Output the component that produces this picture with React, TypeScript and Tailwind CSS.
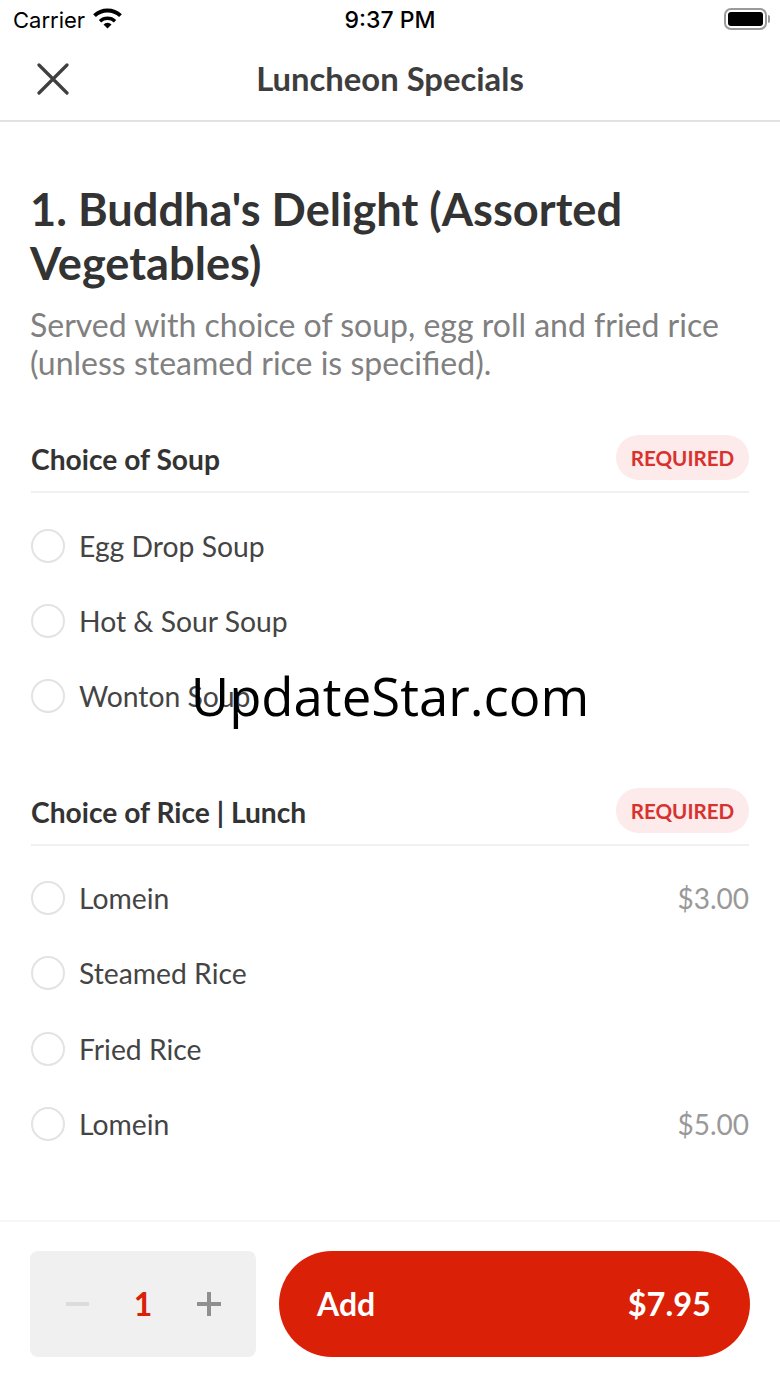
import React from 'react';

interface Option {
  name: string;
  price?: string;
}

const soups: Option[] = [
  { name: 'Egg Drop Soup' },
  { name: 'Hot & Sour Soup' },
  { name: 'Wonton Soup' },
];

const rices: Option[] = [
  { name: 'Lomein', price: '$3.00' },
  { name: 'Steamed Rice' },
  { name: 'Fried Rice' },
  { name: 'Lomein', price: '$5.00' },
];

function StatusBar(): React.ReactElement {
  return (
    <div className="relative flex h-[40px] items-center justify-between pl-[13px] pr-[10px] font-['Inter',sans-serif] text-black">
      <div className="flex items-center gap-[8px]">
        <span className="text-[22px] leading-none">Carrier</span>
        <svg width="29" height="21" viewBox="0 0 29 21" fill="none" className="-mt-[4px]">
          <path d="M14.5 20.5 10.5 16.5a5.6 5.6 0 0 1 8 0Z" fill="#000" />
          <path d="M7 13.2a11 11 0 0 1 15 0" stroke="#000" strokeWidth="3.4" />
          <path d="M1.5 7.6a19 19 0 0 1 26 0" stroke="#000" strokeWidth="4" />
        </svg>
      </div>
      <span className="absolute left-0 right-0 text-center text-[23px] font-medium leading-none">9:37 PM</span>
      <div className="-mt-[3px] flex items-center">
        <div className="flex h-[22px] w-[43px] items-center justify-center rounded-[7px] border-2 border-[#9a9a9a]">
          <div className="h-[14px] w-[35px] rounded-[3px] bg-black" />
        </div>
        <div className="ml-[1px] h-[8px] w-[2px] rounded-r-full bg-[#9a9a9a]" />
      </div>
    </div>
  );
}

function SectionHeader({ title }: { title: string }): React.ReactElement {
  return (
    <div className="flex h-[63px] items-center justify-between border-b-2 border-[#f1f1f1]">
      <h2 className="-mt-[3px] text-[28.2px] font-bold leading-none text-[#333333]">{title}</h2>
      <span className="-mt-[7px] flex h-[45px] w-[133px] items-center justify-center rounded-full bg-[#fdeaea] pt-[2px] text-[20.6px] font-bold leading-none text-[#d8322f]">
        REQUIRED
      </span>
    </div>
  );
}

function OptionRow({ option }: { option: Option }): React.ReactElement {
  return (
    <div className="flex h-[75.4px] items-center">
      <div className="h-[34px] w-[34px] rounded-full border-2 border-[#e3e3e3]" />
      <span className="ml-[14px] text-[28.3px] leading-none text-[#444444]">{option.name}</span>
      {option.price && (
        <span className="ml-auto text-[28px] leading-none text-[#999999]">{option.price}</span>
      )}
    </div>
  );
}

export default function App(): React.ReactElement {
  return (
    <div className="relative flex h-[1387px] w-[780px] flex-col overflow-hidden bg-white font-['Lato',sans-serif]">
      <StatusBar />

      {/* Nav */}
      <div className="relative flex h-[82px] items-center justify-center border-b-2 border-[#e2e2e2]">
        <svg width="32" height="32" viewBox="0 0 32 32" fill="none" className="absolute left-[37px] top-[23px]">
          <path d="M2 2 30 30M30 2 2 30" stroke="#3f3f3f" strokeWidth="3.2" strokeLinecap="round" />
        </svg>
        <h1 className="-mt-[1px] text-[32.8px] font-bold leading-none text-[#3d3d3d]">Luncheon Specials</h1>
      </div>

      {/* Content */}
      <div className="flex-1 pl-[30px] pr-[31px]">
        <h2 className="mt-[60px] text-[45.2px] font-bold leading-[54px] text-[#333333]">
          1. Buddha's Delight (Assorted Vegetables)
        </h2>
        <p className="mt-[16px] text-[32px] leading-[38px] text-[#808080]">
          Served with choice of soup, egg roll and fried rice (unless steamed rice is specified).
        </p>

        <div className="mt-[48px] pl-[1px]">
          <SectionHeader title="Choice of Soup" />
          <div className="mt-[15px]">
            {soups.map((o) => (
              <OptionRow key={o.name} option={o} />
            ))}
          </div>
        </div>

        <div className="mt-[49px] pl-[1px]">
          <SectionHeader title="Choice of Rice | Lunch" />
          <div className="mt-[14px]">
            {rices.map((o, i) => (
              <OptionRow key={i} option={o} />
            ))}
          </div>
        </div>
      </div>

      {/* Footer */}
      <div className="flex h-[167px] gap-[23px] border-t-2 border-[#f6f6f6] px-[30px] pt-[29px]">
        <div className="flex h-[106px] w-[226px] items-center justify-between rounded-[8px] bg-[#f0f0f0] pl-[36px] pr-[35px]">
          <div className="h-[4px] w-[23px] bg-[#dcdcdc]" />
          <span className="text-[32px] font-bold leading-none text-[#db2008]">1</span>
          <svg width="24" height="24" viewBox="0 0 24 24">
            <path d="M12 0v24M0 12h24" stroke="#8f8f8f" strokeWidth="4" />
          </svg>
        </div>
        <div className="flex h-[106px] w-[471px] items-center justify-between rounded-full bg-[#db2008] pl-[38px] pr-[39px] text-[32px] font-bold leading-none text-white">
          <span>Add</span>
          <span className="text-[32.6px]">$7.95</span>
        </div>
      </div>

      {/* Watermark */}
      <div className="absolute left-0 right-0 top-[661px] text-center font-['Open_Sans',sans-serif] text-[52.7px] leading-[70px] text-black">
        UpdateStar.com
      </div>
    </div>
  );
}
